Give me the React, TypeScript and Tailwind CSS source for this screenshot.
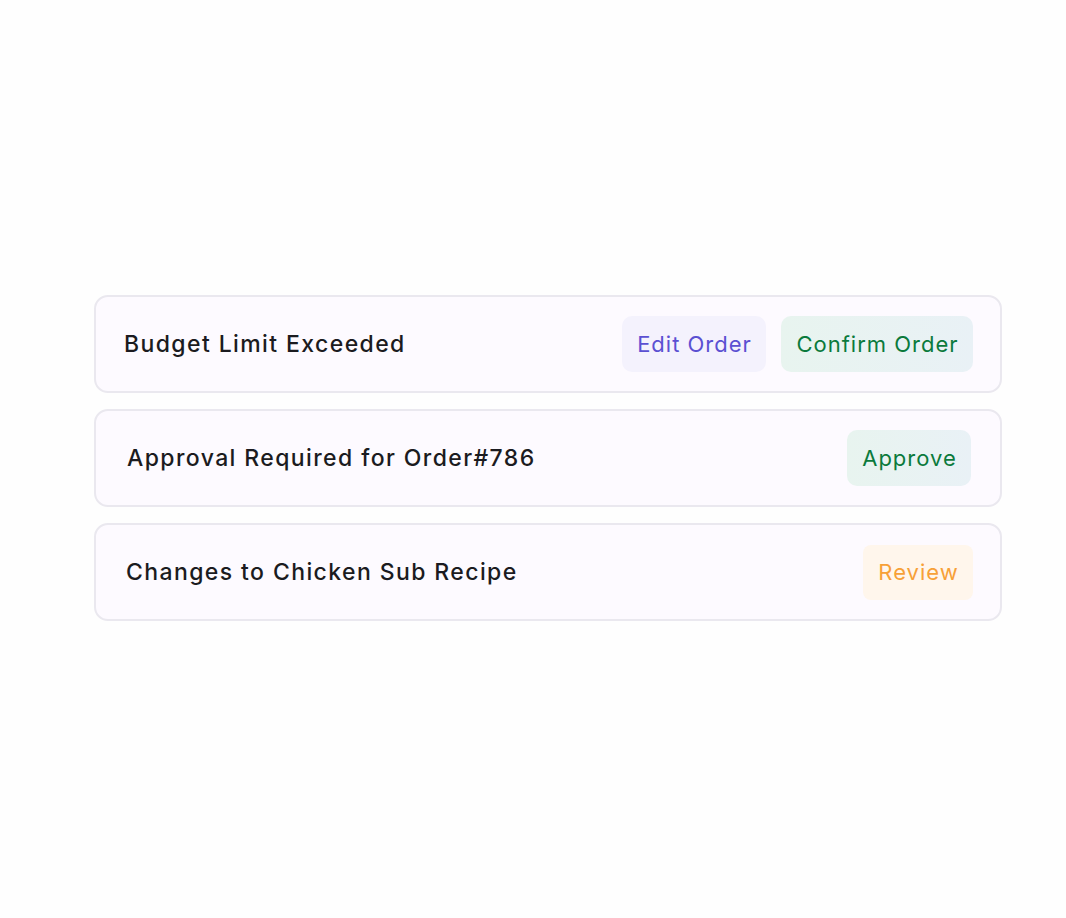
import React from "react";

const font = { fontFamily: "Inter, 'Noto Sans', sans-serif" };

function Card({ title, children, pl }: { title: string; children: React.ReactNode; pl: string }) {
  return (
    <div className={`flex h-[98px] items-center justify-between rounded-[14px] border-2 border-[#eae8ef] bg-[#fdfaff] pr-[27px] ${pl}`}>
      <span className="text-[23px] font-medium tracking-[1.4px] text-[#1b1b20]">{title}</span>
      <div className="flex items-center gap-[15px]">{children}</div>
    </div>
  );
}

export default function App() {
  return (
    <div className="min-h-[918px] w-full bg-[#fefefe]" style={font}>
      <div className="flex flex-col gap-[16px] pl-[94px] pr-[64px] pt-[295px]">
        <Card title="Budget Limit Exceeded" pl="pl-[28px]">
          <div className="flex h-[56px] w-[144px] items-center justify-center rounded-[10px] bg-[#f4f2fd] pl-[1px] text-[22px] tracking-[1px] text-[#5b50d2]">
            Edit Order
          </div>
          <div className="flex h-[56px] w-[192px] items-center justify-center rounded-[10px] bg-gradient-to-r from-[#e8f4ef] to-[#e9f1f6] pl-[1px] text-[22px] tracking-[1px] text-[#0b7a3c]">
            Confirm Order
          </div>
        </Card>
        <Card title="Approval Required for Order#786" pl="pl-[31px]">
          <div className="mr-[2px] flex h-[56px] w-[124px] items-center justify-center rounded-[10px] bg-gradient-to-r from-[#e8f4ef] to-[#e9f1f6] pl-[1px] text-[22px] tracking-[1px] text-[#0b7a3c]">
            Approve
          </div>
        </Card>
        <Card title="Changes to Chicken Sub Recipe" pl="pl-[30px]">
          <div className="flex h-[55px] w-[110px] items-center justify-center rounded-[8px] bg-[#fff6ec] pl-[1px] text-[22px] tracking-[1px] text-[#f7a037]">
            Review
          </div>
        </Card>
      </div>
    </div>
  );
}
